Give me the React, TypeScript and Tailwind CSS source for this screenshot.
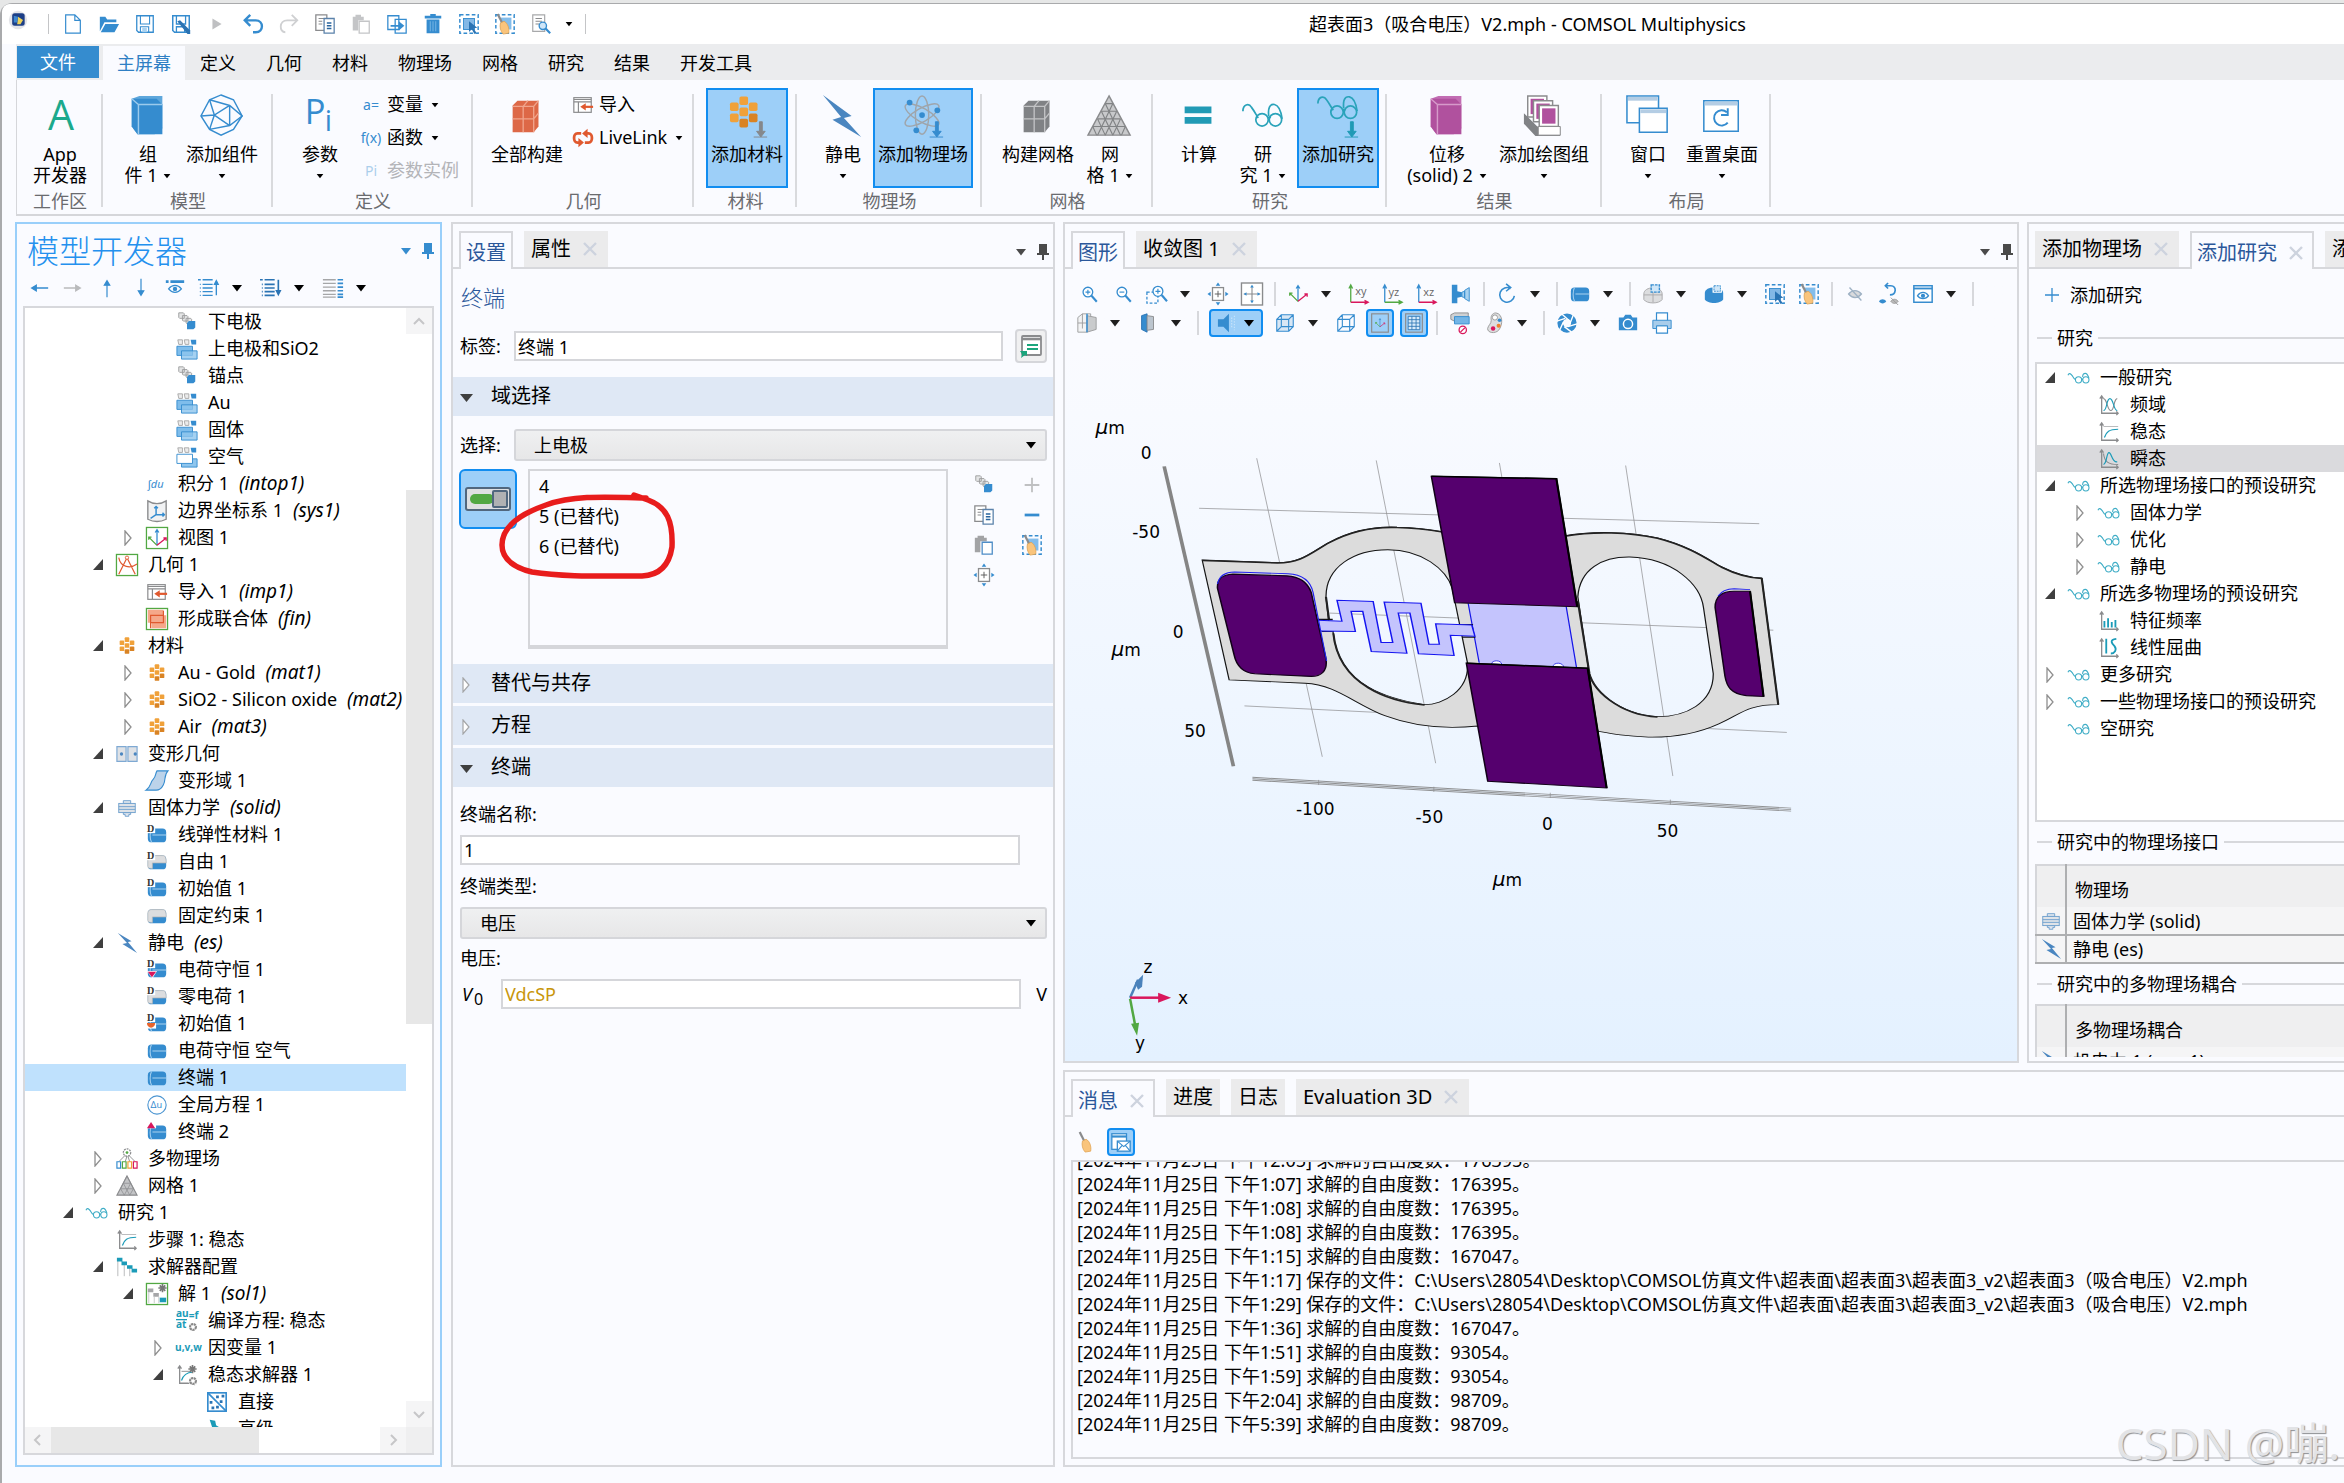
import React from 'react'

const BLUE = '#358ccf'
const GRAY = '#8a8b8d'
const TEAL = '#1b9bb8'
const RED = '#e0592f'
const PINK = '#d9175c'

const cursor = <path d="M12 9l9 7-4 .6 3 5-2 1.2-3-5-3 3z" fill="#2a73b3" />
const broom = (
  <>
    <path d="M4 1l5 10" stroke={GRAY} strokeWidth="2.4" />
    <path d="M7 11l4-2c4 2 6 8 5 13l-6 1c-3-3-4-8-3-12z" fill="#f9c47c" stroke="#e0a04e" strokeWidth="0.8" />
  </>
)
const dashedBox = <rect x="2" y="2" width="20" height="20" fill="none" stroke={BLUE} strokeWidth="1.6" strokeDasharray="4 2.5" />
const axesPair = <path d="M4 3v18h18M2 5l2-3 2 3M20 19l2 2-2 2" fill="none" stroke={GRAY} strokeWidth="1.4" />
const glasses = (
  <g fill="none" stroke="#3fadc6" strokeWidth="1.2">
    <path d="M0 9c1-3 3-2 5 1 1 2 2 3 3.500 4" />
    <circle cx="11.5" cy="14" r="3.4" />
    <circle cx="19.5" cy="14" r="3.4" />
    <path d="M14.800 13.500h1.500M16 11c0-3 1-4 3-4s3 3 3.800 5" />
  </g>
)
const cylinder = (
  <>
    <rect x="2" y="5" width="20" height="15" rx="4" fill={BLUE} />
    <path d="M6 5c-2 4-2 11 0 15M7 12h15" stroke="#a9d2f0" strokeWidth="1.1" fill="none" />
  </>
)
const halfCylinder = (
  <>
    <rect x="2" y="5" width="20" height="15" rx="4" fill={BLUE} />
    <path d="M2 17V9c0-3 2-4 4-4h12c3 0 4 2 4 8H7v6c-3 0-5 0-5-2z" fill="#dcdddf" stroke="#b5b6b8" strokeWidth="0.8" />
  </>
)
const badgeD = (
  <>
    <rect x="0" y="0" width="10" height="10" fill="#fff" />
    <text x="1" y="9" fontSize="11" fontWeight="700" fontFamily="Liberation Serif, serif" fill="#333">D</text>
  </>
)
const miniBoxes = (
  <>
    <path d="M2 2h5v5H3zM9 2h5v5h-4z" fill="#ececec" stroke="#a6a6a6" />
    <path d="M16 2h6v5h-5z" fill={BLUE} />
  </>
)
const bolt = <path d="M2 1l15 9-4 1 10 12L7 13l5-1z" fill="#4a86c0" />
const meshTri = (
  <>
    <path d="M12 1L23 22H1z" fill="#c3c4c6" stroke={GRAY} strokeWidth="1.2" />
    <path d="M8 9h8M5 15h14M8 9l7 13M5 15l4 7M16 9L9 22M19 15l-4 7M12 1l7 14M12 1L5 15" stroke="#8b8c8e" strokeWidth="0.8" fill="none" />
  </>
)
const material = (
  <>
    <g fill="#f0a13a">
      <rect x="9.5" y="2.5" width="5" height="5" rx="1" />
      <rect x="4" y="6" width="5" height="5" rx="1" />
      <rect x="15" y="6" width="5" height="5" rx="1" />
      <rect x="9.5" y="9" width="5" height="5" rx="1" />
      <rect x="4" y="12.5" width="5" height="5" rx="1" />
    </g>
    <rect x="15" y="12.5" width="5" height="5" rx="1" fill="#d98324" />
    <rect x="9.5" y="15.5" width="5" height="5" rx="1" fill="#d98324" />
  </>
)
const solidPart = (
  <>
    <path d="M8 4h8v3H8zM8 17h8v2h-2v2h-4v-2H8z" fill="#dfe6ee" stroke="#6d9fcd" />
    <rect x="3" y="7" width="18" height="10" fill="#dfe3e8" stroke="#6d9fcd" />
    <path d="M3 10.500h18M3 13.500h18" stroke="#6d9fcd" />
  </>
)
const magnifier = (
  <>
    <circle cx="10" cy="9" r="6" fill="#fff" stroke={BLUE} strokeWidth="1.6" />
    <path d="M14.500 13.500L21 21" stroke={BLUE} strokeWidth="2.6" />
  </>
)
const triad = (
  <g fill="none" strokeWidth="1.4">
    <path d="M12 20V3M10 6l2-3 2 3" stroke={BLUE} />
    <path d="M12 20L3 11M3 14v-3h3" stroke="#4fa83d" />
    <path d="M12 20l10-8M22 15v-3h-3" stroke={PINK} />
  </g>
)
const importIcon = (
  <>
    <rect x="2" y="4" width="19" height="16" fill="#fff" stroke={GRAY} strokeWidth="1.3" />
    <path d="M2 6h19M2 8.500h19M7 8v12" stroke={GRAY} strokeWidth="1.3" />
    <path d="M23 14H13" stroke={RED} strokeWidth="2.4" />
    <path d="M15 10v8l-6-4z" fill={RED} />
  </>
)
const star = <path d="M18 1v9M13.500 5.500h9M15 2.500l6 6M21 2.500l-6 6" stroke="#777" strokeWidth="1.8" />
const gear = <circle cx="18.500" cy="18.500" r="3.200" fill="none" stroke="#888" strokeWidth="2.4" strokeDasharray="2.5 0.6" />
const wireCube = <path d="M3 8h13v13H3zM8 3h13v13H8zM3 8l5-5M16 8l5-5M16 21l5-5M3 21l5-5" fill="none" stroke={BLUE} strokeWidth="1.2" />
const diagCubes = (
  <>
    <path d="M3 2h5l1 1v5H4L3 7zM7 5h5l1 1v5H8L7 10zM11 8h5l1 1v5h-5l-1-1z" fill="#e4e5e6" stroke="#9b9c9e" />
    <path d="M12 13l2-2h7v7l-2 2h-7z" fill={BLUE} />
  </>
)
const copyIcon = (
  <>
    <path d="M2 2h12v17H2z" fill="#fff" stroke={GRAY} strokeWidth="1.4" />
    <path d="M5 6h6M5 9h4M5 12h4" stroke={GRAY} strokeWidth="1.3" />
    <path d="M11 6h11v16H11z" fill="#fff" stroke="#5b82ab" strokeWidth="1.4" />
    <path d="M14 11h5M14 14h5M14 17h5" stroke="#27649e" strokeWidth="1.6" />
  </>
)

const icons: Record<string, React.ReactNode> = {
  logo: (
    <>
      <circle cx="12" cy="12" r="11" fill="#e3e4e8" />
      <rect x="5" y="4" width="15" height="15" rx="3" fill="#1d3f87" />
      <path d="M12 8l6 4-3 5h-4z" fill="#ecd25a" />
      <path d="M7 7l5 1-1 7H7z" fill="#3d87cf" />
    </>
  ),
  newFile: <path d="M4 2h10l6 6v14H4zM14 2v6h6" fill="#fff" stroke={BLUE} strokeWidth="1.3" />,
  open: <path d="M2 20V4h6l2 3h10v3H7zM3 21l5-9h15l-5 9z" fill={BLUE} />,
  save: (
    <>
      <path d="M3 3h18v18H5l-2-2z" fill="#fff" stroke={BLUE} strokeWidth="1.4" />
      <path d="M7 3v9h10V3M7 21v-6h9v6" fill="none" stroke={BLUE} strokeWidth="1.2" />
      <path d="M9 16h5v5H9z" fill="#a9d2f0" />
    </>
  ),
  saveAs: (
    <>
      <path d="M3 3h18v18H5l-2-2z" fill="#fff" stroke={BLUE} strokeWidth="1.6" />
      <path d="M7 3v9h10V3M7 21v-6h9v6" fill="none" stroke={BLUE} strokeWidth="1.4" />
      <path d="M8 9l3-1 11 11v4h-3z" fill="#2a73b3" />
    </>
  ),
  play: <path d="M7 6l10 6-10 6z" fill="#bfc0c2" />,
  undo: <path d="M9 2L3 8l6 6M3 8h12c9 0 9 13 0 13h-3" fill="none" stroke={BLUE} strokeWidth="2.600" />,
  redo: <path d="M15 2l6 6-6 6M21 8H10c-9 0-9 13-2 13" fill="none" stroke="#cfd0d2" strokeWidth="2" />,
  copy: copyIcon,
  pasteOff: (
    <>
      <path d="M3 4h12v4H9v11H3zM6 2h6v3H6z" fill="#c4c5c7" />
      <path d="M10 9h11v13H10z" fill="#fff" stroke="#c4c5c7" strokeWidth="1.4" />
    </>
  ),
  paste: (
    <>
      <path d="M2 4h13v4H8v12H2zM5 2h7v3H5z" fill="#a2a3a5" />
      <path d="M10 9h11v13H10z" fill="#fff" stroke="#4d8cc6" strokeWidth="1.4" />
    </>
  ),
  duplicate: (
    <>
      <path d="M2 3h12v15H2zM10 7h12v15H10z" fill="#fff" stroke={BLUE} strokeWidth="1.4" />
      <path d="M5 13h9v-4l6 5-6 5v-4H5z" fill={BLUE} />
    </>
  ),
  trash: (
    <>
      <path d="M5 7h14v15H5zM3 3h18v3H3zM9 1h6v3H9z" fill={BLUE} />
      <path d="M9 9v11M12 9v11M15 9v11" stroke="#7db9e6" />
    </>
  ),
  select: <>{dashedBox}<rect x="6" y="6" width="12" height="12" fill="#83b8e6" stroke={BLUE} />{cursor}</>,
  clearSelect: <>{dashedBox}<rect x="7" y="5" width="12" height="13" fill="#83bdeb" />{broom}</>,
  find: (
    <>
      <path d="M3 2h13v18H3z" fill="#fff" stroke="#a8a9ab" strokeWidth="1.3" />
      <path d="M6 6h7M6 9h7M6 12h4" stroke={GRAY} strokeWidth="1.200" />
      <circle cx="14" cy="14" r="4" fill="#cfe6f8" stroke={BLUE} strokeWidth="1.5" />
      <path d="M17 17l5 5" stroke={BLUE} strokeWidth="2.4" />
    </>
  ),
  broom,
  diagCubes,
  union: <>{miniBoxes}<path d="M1 9h17v10H1z" fill="#7fbdeb" stroke={BLUE} /><path d="M6 14h17v9H6z" fill="#8fc6ee" fillOpacity=".8" stroke={BLUE} /></>,
  difference: <>{miniBoxes}<path d="M6 14h17v9H6z" fill="#8fc6ee" stroke={BLUE} /><path d="M1 9h17v10H1z" fill="#fff" stroke={BLUE} /></>,
  integral: <text x="2" y="16" fontSize="12" fontStyle="italic" fontFamily="Noto Sans, sans-serif" fill={BLUE}>∫du</text>,
  boundarySystem: (
    <>
      <path d="M2 1v20c6 3 14 3 20 0V1c-6 4-14 4-20 0z" fill="#f1f2f3" stroke={GRAY} strokeWidth="1.5" />
      <path d="M11 7v9h9M11 16l-6 4M9 9l2-2 2 2M18 14l2 2-2 2" fill="none" stroke={BLUE} strokeWidth="1.6" />
    </>
  ),
  view: <><rect x="0.500" y="0.500" width="23" height="23" fill="#fff" stroke="#52a843" strokeWidth="1.4" />{triad}</>,
  geometry: (
    <>
      <rect x="0.500" y="0.500" width="23" height="23" fill="#fff" stroke="#52a843" strokeWidth="1.4" />
      <path d="M12 4L3 22M12 4l9 18M3 4c2 11 13 12 20 7" fill="none" stroke={RED} strokeWidth="1.3" />
      <circle cx="12" cy="4" r="1.800" fill="#fff" stroke={RED} />
    </>
  ),
  importIcon,
  formUnion: (
    <>
      <rect x="0.500" y="0.500" width="23" height="23" fill="#fff" stroke="#52a843" strokeWidth="1.4" />
      <path d="M2 2h17v14H2zM6 8h16v14H6z" fill="#f5a88a" />
      <path d="M19 3v13H5M5 22V8h14" fill="none" stroke={RED} strokeWidth="1.3" />
    </>
  ),
  material,
  deformed: (
    <>
      <path d="M1 4h10v16H1zM13 4h10v16H13z" fill="#dfe2e6" stroke="#7ea9d3" strokeWidth="1.300" />
      <circle cx="6" cy="12" r="1.800" fill="#4a86c0" />
      <circle cx="21" cy="12" r="1.800" fill="#4a86c0" />
    </>
  ),
  deformDomain: <path d="M12 1h12c-5 5-2 10-5 15-2 4-4 6-8 6H0c6-4 4-8 8-12 3-3 2-6 4-9z" fill="#bcd3ea" stroke={BLUE} strokeWidth="1.2" />,
  solidPart,
  cylinder,
  halfCylinder,
  cylinderD: <>{cylinder}{badgeD}</>,
  halfCylinderD: <>{halfCylinder}{badgeD}</>,
  cylinderDRed: <>{cylinder}{badgeD}<path d="M1 13h11l-5 8z" fill="#fff" /><path d="M2 14h9l-4.500 6z" fill={PINK} /></>,
  cylinderDOrange: <>{cylinder}{badgeD}<path d="M1 11h10v6H1z" fill="#fff" /><path d="M1 11h9c0 3-2 5-4.500 5S1 14 1 11z" fill="#e8642c" /></>,
  cylinderRed: <>{cylinder}<path d="M0 8h11V0H0z" fill="#fff" /><path d="M1 8h9L5.500 1z" fill={PINK} /></>,
  globalEq: (
    <>
      <circle cx="12" cy="12" r="10" fill="#fff" stroke="#4d96d2" strokeWidth="1.200" />
      <text x="5" y="15.500" fontSize="10" fontFamily="Noto Sans, sans-serif" fill={BLUE}>Δu</text>
    </>
  ),
  bolt,
  multiphysics: (
    <>
      <circle cx="12" cy="5" r="4" fill="none" stroke={GRAY} strokeWidth="1.4" strokeDasharray="2 1" />
      <circle cx="12" cy="5" r="1.5" fill="#52a843" />
      <path d="M10 8L3 15M12 9l-2 6M13 9l2 6M14 8l7 7" stroke={GRAY} />
      <g fill="#fff" strokeWidth="1.300">
        <path d="M1 15h4v7H1z" stroke={BLUE} />
        <path d="M7 15h4v7H7z" stroke="#52a843" />
        <path d="M13 15h4v7h-4z" stroke="#f0a13a" />
        <path d="M19 15h4v7h-4z" stroke={PINK} />
      </g>
    </>
  ),
  meshTri,
  glasses,
  stationary: <>{axesPair}<path d="M6 6h16" stroke="#b5b6b8" /><path d="M7 18c2-6 5-9 15-9" fill="none" stroke={TEAL} strokeWidth="1.3" /></>,
  frequency: <>{axesPair}<path d="M6 5c4 0 4 13 8 13s3-13 7-13" fill="none" stroke={GRAY} strokeWidth="1.200" /><path d="M6 18c4 0 3-13 7-13s4 13 8 13" fill="none" stroke={TEAL} strokeWidth="1.200" /></>,
  transient: <>{axesPair}<path d="M6 6c1 9 5 12 16 12" fill="none" stroke={GRAY} strokeWidth="1.200" /><path d="M6 18c4-1 3-13 6-13s3 11 9 10" fill="none" stroke={TEAL} strokeWidth="1.3" /></>,
  eigen: <>{axesPair}<path d="M7 19v-7M11 19V9M15 19v-6M19 19v-8" stroke={TEAL} strokeWidth="2" /></>,
  buckling: <>{axesPair}<path d="M9 2v16M20 2c-8 1-5 5-2 8 3 4 0 8-4 8" fill="none" stroke={TEAL} strokeWidth="2" /></>,
  solverConfig: (
    <>
      <path d="M2 4v18M9 8v14M15 12v10" stroke="#b5b6b8" />
      <path d="M1 2h6v4H1zM6 6h6v4H6zM12 10h6v4h-6zM17 14h6v4h-6z" fill={TEAL} />
    </>
  ),
  solution: (
    <>
      <rect x="0.500" y="0.500" width="23" height="23" fill="#fff" stroke="#52a843" strokeWidth="1.4" />
      <path d="M2 6h6v4H2zM8 11h6v4H8z" fill="#a5a6a8" />
      <path d="M3 10v12M9 15v7M14 15v7" stroke="#c5c6c8" />
      <rect x="15" y="16" width="7" height="5" fill={TEAL} />
      {star}
    </>
  ),
  compile: (
    <>
      <g fontSize="11" fontWeight="700" fontFamily="Noto Sans, sans-serif" fill={TEAL}>
        <text x="0" y="8">au</text>
        <text x="0" y="20">at</text>
        <text x="14" y="10">=f</text>
      </g>
      <path d="M0 10.500h12" stroke={TEAL} strokeWidth="1.4" />
      {gear}
    </>
  ),
  dependent: <text x="-1" y="15" fontSize="11" fontWeight="700" fontFamily="Open Sans, sans-serif" fill={TEAL}>u,v,w</text>,
  stationarySolver: <>{axesPair}<path d="M6 8h9" stroke={GRAY} /><path d="M6 18c2-6 6-9 12-9" fill="none" stroke={TEAL} strokeWidth="1.3" />{star}<circle cx="18.500" cy="18.500" r="5" fill="#fff" />{gear}</>,
  direct: (
    <>
      <rect x="2" y="2" width="20" height="20" fill="#fff" stroke={BLUE} strokeWidth="1.8" />
      <path d="M2 2l20 20" stroke={BLUE} strokeWidth="1.800" />
      <path d="M11 5h3v3h-3zM17 4h3v3h-3zM15 10h3v3h-3zM4 11h3v3H4zM6 17h3v3H6zM11 16h3v3h-3z" fill="#2a73b3" />
    </>
  ),
  wrench: <path d="M4 2l6 1 1 5 10 6v8l-3 1-4-9-7-3z" fill={TEAL} />,
  back: <path d="M22 12H4M9 9l-5 3 5 3z" stroke={BLUE} strokeWidth="1.4" fill={BLUE} />,
  forward: <path d="M2 12h18M15 9l5 3-5 3z" stroke="#b9babc" strokeWidth="1.4" fill="#b9babc" />,
  up: <path d="M12 22V4M9 9l3-5 3 5z" stroke={BLUE} strokeWidth="1.3" fill={BLUE} />,
  down: <path d="M12 2v18M9 15l3 5 3-5z" stroke={BLUE} strokeWidth="1.3" fill={BLUE} />,
  showEye: (
    <>
      <path d="M2 5h3M7 5h15" stroke={BLUE} strokeWidth="3" />
      <path d="M5 13c4-5 10-5 14 0-4 5-10 5-14 0z" fill="none" stroke={BLUE} strokeWidth="1.4" />
      <circle cx="12" cy="13" r="2.400" fill={BLUE} />
    </>
  ),
  collapse: <path d="M0 3h3M5 3h11M2 8h1M5 8h11M2 12h1M5 12h11M2 16h1M5 16h11M2 20h1M5 20h11M20 20V4M18 8l2-4 2 4z" stroke={BLUE} strokeWidth="1.5" fill={BLUE} />,
  expand: <path d="M0 3h3M5 3h11M2 8h1M5 8h11M2 12h1M5 12h11M2 16h1M5 16h11M2 20h1M5 20h11M20 3v16M18 15l2 4 2-4z" stroke="#2a73b3" strokeWidth="1.8" fill={BLUE} />,
  columns: (
    <>
      <path d="M1 3h14M1 7h14M1 11h14M1 15h14M1 19h14M1 22h14" stroke="#a5a6a8" strokeWidth="1.5" />
      <path d="M17 3h6M17 7h6M17 11h6M17 15h6M17 19h6M17 22h6" stroke={BLUE} strokeWidth="1.8" />
    </>
  ),
  plusOff: <path d="M12 4v16M4 12h16" stroke="#bfc0c2" strokeWidth="2" />,
  plus: <path d="M12 5v14M5 12h14" stroke={BLUE} strokeWidth="1.300" />,
  minus: <path d="M4 12h16" stroke={BLUE} strokeWidth="3" />,
  extents: (
    <>
      <rect x="6" y="5" width="12" height="14" fill="#fff" stroke={GRAY} strokeWidth="1.4" />
      <path d="M12 8.500v7M8.500 12h7" stroke="#555" />
      <path d="M9.500 3L12 -.5 14.500 3zM9.500 21l2.500 3.500 2.500-3.500zM4 9.500L.5 12 4 14.500zM20 9.500l3.500 2.500-3.500 2.500z" fill={BLUE} />
    </>
  ),
  fitWindow: (
    <>
      <rect x="0.500" y="0" width="23" height="24" fill="#fff" stroke={GRAY} strokeWidth="1.500" />
      <path d="M12 3v18M3 12h18" stroke={GRAY} strokeWidth="1.200" />
      <path d="M10 5l2-3 2 3zM10 19l2 3 2-3zM6 10l-3 2 3 2zM18 10l3 2-3 2z" fill={BLUE} />
    </>
  ),
  zoomIn: <g transform="translate(2 2) scale(.88)">{magnifier}<path d="M10 6v6M7 9h6" stroke={BLUE} strokeWidth="1.4" /></g>,
  zoomOut: <g transform="translate(2 2) scale(.88)">{magnifier}<path d="M7 9h6" stroke={BLUE} strokeWidth="1.4" /></g>,
  zoomBox: <><path d="M1 10h12v12H1z" fill="none" stroke={BLUE} strokeWidth="1.4" strokeDasharray="3 2" /><g transform="translate(4 1) scale(.9)">{magnifier}<path d="M10 6v6M7 9h6" stroke={BLUE} strokeWidth="1.4" /></g></>,
  triad,
  planeXY: <><path d="M3 21V3M1 6l2-4 2 4" fill="none" stroke="#52a843" strokeWidth="1.4" /><path d="M3 21h18M18 19l4 2-4 2" fill="none" stroke={PINK} strokeWidth="1.4" /><text x="8" y="13" fontSize="12" fontFamily="Open Sans, sans-serif" fill="#666">xy</text></>,
  planeYZ: <><path d="M3 21V3M1 6l2-4 2 4" fill="none" stroke={BLUE} strokeWidth="1.4" /><path d="M3 21h18M18 19l4 2-4 2" fill="none" stroke="#52a843" strokeWidth="1.4" /><text x="7" y="14" fontSize="12" fontFamily="Open Sans, sans-serif" fill="#666">yz</text></>,
  planeXZ: <><path d="M3 21V3M1 6l2-4 2 4" fill="none" stroke={BLUE} strokeWidth="1.4" /><path d="M3 21h18M18 19l4 2-4 2" fill="none" stroke={PINK} strokeWidth="1.4" /><text x="8" y="14" fontSize="12" fontFamily="Open Sans, sans-serif" fill="#666">xz</text></>,
  camView: <><path d="M2 2h6v20H2zM8 9l5 1v5l-5 1z" fill={BLUE} /><path d="M13 10l3-1v7l-3-1zM16 8l5-3v15l-5-3z" fill="#a9d2f0" stroke={BLUE} /></>,
  rotate: <path d="M16 6a8 8 0 1 0 4 8M11 1l5 4-5 4" fill="none" stroke={BLUE} strokeWidth="1.700" />,
  grayLens: <><path d="M2 12c0-9 20-9 20 0v6c-3 5-17 5-20 0z" fill="#dcdddf" stroke="#a8a9ab" /><path d="M2 13h20M12 6v15" stroke="#a8a9ab" /><rect x="10" y="2" width="9" height="8" fill="#cfe6f8" stroke={BLUE} strokeWidth="1.5" strokeDasharray="3 1" /></>,
  blueLens: <><path d="M2 11c0-8 20-8 20 0v7c-3 5-17 5-20 0z" fill={BLUE} /><rect x="11" y="2" width="9" height="8" fill="#cfe6f8" stroke="#fff" strokeWidth="1.2" /><rect x="12" y="3" width="7" height="6" fill="none" stroke={BLUE} strokeDasharray="2 1" /></>,
  eyeOff: <path d="M5 12c4-5 10-5 14 0-4 5-10 5-14 0zM6 5l13 14" fill="#d9dadc" stroke="#9fb2c4" strokeWidth="1.5" />,
  resetHide: <><path d="M8 3h6c7 0 6 10-1 10M11 0L8 3l3 3" fill="none" stroke={BLUE} strokeWidth="1.800" /><path d="M1 20c2-3 6-3 8 0-2 3-6 3-8 0z" fill={BLUE} /><path d="M14 20c2-3 6-3 8 0-2 3-6 3-8 0zM14 16l8 8" fill="#bbb" stroke="#999" /></>,
  showWindow: <><rect x="2" y="3" width="20" height="18" fill="#fff" stroke={BLUE} strokeWidth="1.6" /><path d="M2 6h20" stroke={BLUE} strokeWidth="2" /><path d="M6 14c3-5 9-5 12 0-3 4-9 4-12 0z" fill="none" stroke={BLUE} strokeWidth="1.4" /><circle cx="12" cy="14" r="2.300" fill={BLUE} /></>,
  clipBox: <><path d="M2 6l5-4h9v16l-4 4H2z" fill="#f2f3f4" stroke="#9b9c9e" /><path d="M12 4l10 2v13l-10 3z" fill="#c9cbcd" stroke="#9b9c9e" /><path d="M2 12h10M7 2v16" stroke="#9b9c9e" /><path d="M12 2v20" stroke={BLUE} strokeWidth="1.6" /></>,
  clipPlane: <><path d="M5 4l6-2v20l-6-3z" fill={BLUE} stroke="#2a73b3" /><path d="M11 4l7 1v14l-7 1z" fill="#bcc5ce" stroke={GRAY} /></>,
  light: <><path d="M1 8h6v8H1zM7 8l6-6v20l-6-6z" fill={BLUE} /><path d="M16 6v12M19 4v16" stroke="#c5e2f9" strokeWidth="1.300" strokeDasharray="1.5 1.5" /></>,
  transparent: <><path d="M3 8h13v13H3zM8 3h13v13H8z" fill="#c9def1" opacity=".7" />{wireCube}</>,
  wireCube,
  axesBox: <><rect x="2" y="1" width="20" height="22" fill="none" stroke={GRAY} strokeWidth="1.4" /><g transform="translate(5 5) scale(.58)">{triad}</g></>,
  grid: <><rect x="2" y="1" width="20" height="22" fill="none" stroke={GRAY} strokeWidth="1.4" /><path d="M5 4h14v16H5z" fill="#d6eafa" stroke="#2a73b3" /><path d="M9.500 4v16M14.500 4v16M5 8h14M5 12h14M5 16h14" stroke="#2a73b3" /></>,
  hideBox: <><path d="M2 3l4-2h15v9H6L2 8z" fill="#cfd1d3" stroke={GRAY} /><path d="M6 5h16v8H6z" fill="#73b5e6" stroke={BLUE} /><circle cx="15" cy="19.500" r="4" fill="#fff" stroke={PINK} strokeWidth="1.4" /><path d="M12.500 22l5-5" stroke={PINK} strokeWidth="1.4" /></>,
  palette: <><path d="M14 1c8 1 8 13 3 19-4 4-12 3-12-2 1-4 4-5 4-9-1-4 1-8 5-8z" fill="#dddedf" stroke="#999" /><circle cx="13" cy="6" r="2.800" fill="#fff" stroke="#999" /><circle cx="18" cy="9" r="2" fill={BLUE} /><circle cx="17" cy="15" r="2.200" fill="#f0812c" /><circle cx="11" cy="18" r="2.400" fill={PINK} /></>,
  aperture: <><circle cx="12" cy="12" r="7.500" fill="none" stroke={BLUE} strokeWidth="6" /><path d="M6 2l8 7M19 3l-4 10M23 13l-10 3M17 22l-8-6M4 20l4-9M1 10l9-3" stroke="#fff" strokeWidth="1.500" /></>,
  camera: <><path d="M2 6h5l2-3h6l2 3h5v14H2z" fill={BLUE} /><circle cx="12" cy="13" r="5" fill={BLUE} stroke="#fff" strokeWidth="1.600" /></>,
  printer: <><path d="M6 1h12v9H6zM6 15h12v8H6z" fill="#fff" stroke={BLUE} strokeWidth="1.3" /><path d="M2 9h20v9h-4v-3H6v3H2z" fill="#a9cdea" stroke={BLUE} /></>,
  mail: <><rect x="2" y="3" width="16" height="17" fill="#fff" stroke={BLUE} strokeWidth="1.4" /><path d="M2 6h16" stroke={BLUE} strokeWidth="2.400" /><rect x="8" y="11" width="14" height="11" fill="#fff" stroke={BLUE} strokeWidth="1.4" /><path d="M8 11l7 6 7-6M8 22l5-6M22 22l-5-6" fill="none" stroke={BLUE} strokeWidth="1.200" /></>,
  goTo: <><rect x="3" y="2" width="19" height="19" rx="1" fill="#fff" stroke={GRAY} strokeWidth="1.800" /><path d="M3 5h19" stroke={GRAY} strokeWidth="2.600" /><path d="M8 11h11M8 15h11" stroke="#1ba57c" strokeWidth="2" /><path d="M1 17h7v5l-2-1-4 3 1-4z" fill="#1ba57c" /></>,
  livelink: (
    <>
      <path d="M10 7H6c-5 0-5 10 0 10h2M14 17h4c5 0 5-10 0-10h-2" fill="none" stroke={RED} strokeWidth="3" />
      <path d="M7 12l6 5-6 5zM17 2v10l-6-5z" fill={RED} />
    </>
  ),
}

const cubeFaces = (a: string, b: string, line: string) => (
  <>
    <path d="M6 5l8-3h24v34l-8 6H12l-6-8z" fill={b} />
    <path d="M6 5h26l6 6v31H12L6 34z" fill={a} />
    <path d="M6 5l7 6h25M13 11v31" fill="none" stroke={line} strokeWidth="1.500" />
  </>
)
const glassesBig = (color: string) => (
  <g fill="none" stroke={color} strokeWidth="1.800">
    <path d="M2 18c0-7 6-9 9-4 3 4 5 8 7 11" />
    <circle cx="22" cy="27" r="6.500" />
    <circle cx="36" cy="27" r="6.500" />
    <path d="M28 25c1-1 2-1 3 0M29 23c-1-8 1-13 6-12 5 1 7 8 8 15" />
  </g>
)
const gridCube = (color: string, line: string) => (
  <>
    <path d="M8 12l5-5h22v27l-5 6H8z" fill={color} />
    <path d="M8 13h22l5-6M30 13v27M19 13v27M8 26h22l5-6M19 13l5-6" fill="none" stroke={line} strokeWidth="1.400" />
  </>
)
const downArrow = (color: string) => <path d="M36 29v10h-3l4.500 6 4.500-6h-3V29zM30 45h14" fill={color} stroke={color} strokeWidth="1" />

const bigIcons: Record<string, React.ReactNode> = {
  app: <text x="24" y="38" textAnchor="middle" fontSize="43" fontFamily="Open Sans, sans-serif" fill="#1ba98c">A</text>,
  component: cubeFaces(BLUE, '#5ea7dc', '#9bcaec'),
  addComponent: (
    <g fill="none" stroke={BLUE} strokeWidth="1.500">
      <path d="M22 1l13 5 9 17-9 14-13 6-12-6-9-14 9-17z" />
      <path d="M10 6l21 6 13 11-13 10-21 4M31 12v21M10 6l5 16-5 15M1 23l14-1 16-10M15 22l16 11" />
    </g>
  ),
  params: (
    <g fontFamily="Open Sans, sans-serif" fill={BLUE}>
      <text x="7" y="31" fontSize="36">P</text>
      <text x="28" y="39" fontSize="30">i</text>
    </g>
  ),
  buildAll: gridCube('#dd6847', '#f0a48c'),
  addMaterial: <><g transform="translate(-2 -2) scale(1.8)">{material}</g>{downArrow('#85888c')}</>,
  electro: <path d="M2 1l30 22-8 2 18 20L12 27l9-3z" fill="#4a86c0" />,
  addPhysics: (
    <>
      <g fill="none" stroke="#9fa5ab" strokeWidth="1.500">
        <ellipse cx="22" cy="22" rx="7" ry="20" />
        <ellipse cx="22" cy="22" rx="7" ry="20" transform="rotate(60 22 22)" />
        <ellipse cx="22" cy="22" rx="7" ry="20" transform="rotate(-60 22 22)" />
      </g>
      <g fill={BLUE}><circle cx="22" cy="22" r="3" /><circle cx="9" cy="9" r="3" /><circle cx="38" cy="17" r="3" /><circle cx="16" cy="38" r="3" /></g>
      {downArrow(BLUE)}
    </>
  ),
  buildMesh: gridCube('#808285', '#c2c3c5'),
  mesh: (
    <>
      <path d="M22 2L44 43H0z" fill="#c8c9cb" stroke={GRAY} strokeWidth="1.500" />
      <path d="M18 10h8M14 18h16M10 26h24M5 34h34M18 10l16 33M14 18l12 25M10 26l8 17M5 34l4 9M26 10L10 43M30 18L18 43M34 26l-8 17M39 34l-4 9" stroke="#818385" strokeWidth="1.200" fill="none" />
    </>
  ),
  compute: <path d="M8 13h28v7H8zM8 24h28v7H8z" fill="#219ab5" />,
  study: glassesBig('#2aa3ba'),
  addStudy: <><g transform="translate(0 -8)">{glassesBig('#2aa3ba')}</g>{downArrow('#219ab5')}</>,
  plotGroup: cubeFaces('#b0519e', '#c26db3', '#d69aca'),
  addPlot: (
    <>
      <path d="M6 2h20v22H6z" fill="#fff" stroke={GRAY} strokeWidth="1.500" />
      <path d="M9 5h14v16H9z" fill="#b0519e" />
      <path d="M12 7h20v22H12z" fill="#fff" stroke={GRAY} strokeWidth="1.500" />
      <path d="M15 10h14v16H15z" fill="#b0519e" />
      <path d="M18 12h20v22H18z" fill="#fff" stroke={GRAY} strokeWidth="1.500" />
      <path d="M21 15h14v16H21z" fill="#b0519e" />
      <path d="M2 20l14 14h24v10H14L2 31z" fill="#808285" />
      <path d="M17 34h23v9H17z" fill="#fff" stroke={GRAY} />
    </>
  ),
  windows: (
    <>
      <path d="M1 2h33v28H1z" fill="#fff" stroke={BLUE} strokeWidth="1.600" />
      <path d="M2 3h31v4H2z" fill="#b4cde4" />
      <path d="M14 15h29v25H14z" fill="#fff" stroke={BLUE} strokeWidth="1.600" />
      <path d="M15 16h27v4H15z" fill="#b4cde4" />
    </>
  ),
  reset: (
    <>
      <path d="M4 7h36v32H4z" fill="#fff" stroke={BLUE} strokeWidth="1.600" />
      <path d="M5 8h34v4H5z" fill="#b4cde4" />
      <path d="M29 30a8 8 0 1 1-1-11M29 15v7h-7" fill="none" stroke={BLUE} strokeWidth="2" />
    </>
  ),
}

const Icon = ({ name, className = 'w-[22px] h-[22px]' }: { name: string; className?: string }) => (
  <svg viewBox="0 0 24 24" className={`shrink-0 overflow-visible ${className}`} fill="none" aria-hidden="true">{icons[name]}</svg>
)

const Caret = ({ className = 'w-3 text-[#1e1e1e]' }: { className?: string }) => (
  <svg viewBox="0 0 12 8" className={`h-2 shrink-0 ${className}`} aria-hidden="true"><path d="M1 1h10L6 7.500z" fill="currentColor" /></svg>
)

const Pin = () => (
  <svg viewBox="0 0 12 18" className="h-[18px] w-3" aria-hidden="true">
    <path d="M2 1h8v9h2v2H0v-2h2zM5 12h2v5H5z" fill="currentColor" />
  </svg>
)

const IconButton = ({ name, label }: { name: string; label: string }) => (
  <button aria-label={label} className="w-6 h-6 flex items-center justify-center shrink-0">
    <Icon name={name} />
  </button>
)

/* ---------- title bar and ribbon ---------- */

const QUICK = ['newFile', 'open', 'save', 'saveAs', 'play', 'undo', 'redo', 'copy', 'pasteOff', 'duplicate', 'trash', 'select', 'clearSelect', 'find']
const MENUS = ['定义', '几何', '材料', '物理场', '网格', '研究', '结果', '开发工具']

const TitleBar = () => (
  <div className="h-10 flex items-center bg-white rounded-tl-lg shrink-0">
    <Icon name="logo" className="w-5 h-5 ml-1.5 mb-2" />
    <div className="w-px h-5 bg-[#c4c5c7] ml-5 mr-3" />
    <div className="flex items-center gap-3">
      {QUICK.map((q) => <IconButton key={q} name={q} label={q} />)}
      <button aria-label="more"><Caret className="w-2 text-black" /></button>
      <div className="w-px h-5 bg-[#c4c5c7]" />
    </div>
    <h1 className="ml-[723px] text-[18px] whitespace-nowrap">超表面3（吸合电压）V2.mph - COMSOL Multiphysics</h1>
  </div>
)

interface BigButtonProps {
  icon: string
  line1: string
  line2?: string
  caret?: boolean
  active?: boolean
  className?: string
}

const BigButton = ({ icon, line1, line2, caret, active, className = '' }: BigButtonProps) => (
  <button className={`h-[100px] shrink-0 flex flex-col items-center pt-1 border-2 leading-[21px] whitespace-nowrap ${active ? 'bg-[#9dcff8] border-[#118df0]' : 'border-transparent'} ${className}`}>
    <svg viewBox="0 0 46 46" className="w-11 h-11 overflow-visible" aria-hidden="true">{bigIcons[icon]}</svg>
    <span className="mt-1.5">{line1}</span>
    <span className="flex items-center gap-1.5 h-[21px]">
      {line2}
      {caret && <Caret className="w-2 text-black" />}
    </span>
  </button>
)

const SmallButton = ({ icon, text, caret, disabled }: { icon: React.ReactNode; text: string; caret?: boolean; disabled?: boolean }) => (
  <button className={`h-[33px] flex items-center gap-1 whitespace-nowrap ${disabled ? 'text-[#b3b4b8]' : ''}`} disabled={disabled}>
    <span className={`w-6 flex justify-center text-[14px] text-[#358ccf] ${disabled ? 'opacity-40' : ''}`}>{icon}</span>
    {text}
    {caret && <Caret className="w-2 ml-1 text-black" />}
  </button>
)

const Group = ({ label, className, children }: { label: string; className: string; children: React.ReactNode }) => (
  <div className={`shrink-0 relative flex flex-col ${className}`}>
    <div className="flex flex-1">{children}</div>
    <div className="text-center text-[#6a6b6f] leading-5">{label}</div>
    <div className="absolute right-0 top-1.5 bottom-1 w-0.5 bg-[#d9dadd]" />
  </div>
)

const Ribbon = () => (
  <div className="ml-[14px] shrink-0">
    <nav className="flex items-stretch h-9 bg-[#ebecee] text-[18px] border-t-2 border-[#ebecee]">
      <button className="w-[82px] ml-px h-8 bg-[#358ccf] text-white">文件</button>
      <button className="ml-1 px-3.5 bg-[#fafbff] text-[#2f7fc4]">主屏幕</button>
      {MENUS.map((m) => <button key={m} className="px-[15px]">{m}</button>)}
    </nav>
    <div className="flex h-[136px] pt-2 pb-[3px] border-l border-b-2 border-[#d5d6da] text-[18px] bg-[#fafbff]">
      <Group label="工作区" className="w-[86px]">
        <BigButton icon="app" line1="App" line2="开发器" className="w-full" />
      </Group>
      <Group label="模型" className="w-[170px]">
        <BigButton icon="component" line1="组" line2="件 1" caret className="w-[70px] ml-2.5" />
        <BigButton icon="addComponent" line1="添加组件" caret className="w-[78px]" />
      </Group>
      <Group label="定义" className="w-[200px]">
        <BigButton icon="params" line1="参数" caret className="w-[70px] ml-3" />
        <div className="flex flex-col ml-1">
          <SmallButton icon="a=" text="变量" caret />
          <SmallButton icon="f(x)" text="函数" caret />
          <SmallButton icon="Pi" text="参数实例" disabled />
        </div>
      </Group>
      <Group label="几何" className="w-[221px]">
        <BigButton icon="buildAll" line1="全部构建" className="w-[84px] ml-3" />
        <div className="flex flex-col ml-0.5">
          <SmallButton icon={<Icon name="importIcon" />} text="导入" />
          <SmallButton icon={<Icon name="livelink" />} text="LiveLink" caret />
        </div>
      </Group>
      <Group label="材料" className="w-[103px]">
        <BigButton icon="addMaterial" line1="添加材料" active className="w-[82px] ml-3" />
      </Group>
      <Group label="物理场" className="w-[185px]">
        <BigButton icon="electro" line1="静电" caret className="w-[60px] ml-4" />
        <BigButton icon="addPhysics" line1="添加物理场" active className="w-[100px]" />
      </Group>
      <Group label="网格" className="w-[171px]">
        <BigButton icon="buildMesh" line1="构建网格" className="w-[84px] ml-3.5" />
        <BigButton icon="mesh" line1="网" line2="格 1" caret className="w-[60px]" />
      </Group>
      <Group label="研究" className="w-[234px]">
        <BigButton icon="compute" line1="计算" className="w-[60px] ml-4" />
        <BigButton icon="study" line1="研" line2="究 1" caret className="w-[60px] ml-1" />
        <BigButton icon="addStudy" line1="添加研究" active className="w-[82px] ml-1" />
      </Group>
      <Group label="结果" className="w-[215px]">
        <BigButton icon="plotGroup" line1="位移" line2="(solid) 2" caret className="w-[96px] ml-3" />
        <BigButton icon="addPlot" line1="添加绘图组" caret className="w-[98px]" />
      </Group>
      <Group label="布局" className="w-[169px]">
        <BigButton icon="windows" line1="窗口" caret className="w-[60px] ml-4" />
        <BigButton icon="reset" line1="重置桌面" caret className="w-[84px] ml-0.5" />
      </Group>
    </div>
  </div>
)

/* ---------- trees ---------- */

interface Row {
  level: number
  icon: string
  text: string
  tag?: string
  open?: boolean
  selected?: boolean
}

const MODEL_ROWS: Row[] = [
  { level: 4, icon: 'diagCubes', text: '下电极' },
  { level: 4, icon: 'union', text: '上电极和SiO2' },
  { level: 4, icon: 'diagCubes', text: '锚点' },
  { level: 4, icon: 'union', text: 'Au' },
  { level: 4, icon: 'union', text: '固体' },
  { level: 4, icon: 'difference', text: '空气' },
  { level: 3, icon: 'integral', text: '积分 1', tag: '(intop1)' },
  { level: 3, icon: 'boundarySystem', text: '边界坐标系 1', tag: '(sys1)' },
  { level: 3, icon: 'view', text: '视图 1', open: false },
  { level: 2, icon: 'geometry', text: '几何 1', open: true },
  { level: 3, icon: 'importIcon', text: '导入 1', tag: '(imp1)' },
  { level: 3, icon: 'formUnion', text: '形成联合体', tag: '(fin)' },
  { level: 2, icon: 'material', text: '材料', open: true },
  { level: 3, icon: 'material', text: 'Au - Gold', tag: '(mat1)', open: false },
  { level: 3, icon: 'material', text: 'SiO2 - Silicon oxide', tag: '(mat2)', open: false },
  { level: 3, icon: 'material', text: 'Air', tag: '(mat3)', open: false },
  { level: 2, icon: 'deformed', text: '变形几何', open: true },
  { level: 3, icon: 'deformDomain', text: '变形域 1' },
  { level: 2, icon: 'solidPart', text: '固体力学', tag: '(solid)', open: true },
  { level: 3, icon: 'cylinderD', text: '线弹性材料 1' },
  { level: 3, icon: 'halfCylinderD', text: '自由 1' },
  { level: 3, icon: 'cylinderD', text: '初始值 1' },
  { level: 3, icon: 'halfCylinder', text: '固定约束 1' },
  { level: 2, icon: 'bolt', text: '静电', tag: '(es)', open: true },
  { level: 3, icon: 'cylinderDRed', text: '电荷守恒 1' },
  { level: 3, icon: 'halfCylinderD', text: '零电荷 1' },
  { level: 3, icon: 'cylinderDOrange', text: '初始值 1' },
  { level: 3, icon: 'cylinder', text: '电荷守恒 空气' },
  { level: 3, icon: 'cylinder', text: '终端 1', selected: true },
  { level: 3, icon: 'globalEq', text: '全局方程 1' },
  { level: 3, icon: 'cylinderRed', text: '终端 2' },
  { level: 2, icon: 'multiphysics', text: '多物理场', open: false },
  { level: 2, icon: 'meshTri', text: '网格 1', open: false },
  { level: 1, icon: 'glasses', text: '研究 1', open: true },
  { level: 2, icon: 'stationary', text: '步骤 1: 稳态' },
  { level: 2, icon: 'solverConfig', text: '求解器配置', open: true },
  { level: 3, icon: 'solution', text: '解 1', tag: '(sol1)', open: true },
  { level: 4, icon: 'compile', text: '编译方程: 稳态' },
  { level: 4, icon: 'dependent', text: '因变量 1', open: false },
  { level: 4, icon: 'stationarySolver', text: '稳态求解器 1', open: true },
  { level: 5, icon: 'direct', text: '直接' },
  { level: 5, icon: 'wrench', text: '高级' },
]

const STUDY_ROWS: Row[] = [
  { level: 0, icon: 'glasses', text: '一般研究', open: true },
  { level: 1, icon: 'frequency', text: '频域' },
  { level: 1, icon: 'stationary', text: '稳态' },
  { level: 1, icon: 'transient', text: '瞬态', selected: true },
  { level: 0, icon: 'glasses', text: '所选物理场接口的预设研究', open: true },
  { level: 1, icon: 'glasses', text: '固体力学', open: false },
  { level: 1, icon: 'glasses', text: '优化', open: false },
  { level: 1, icon: 'glasses', text: '静电', open: false },
  { level: 0, icon: 'glasses', text: '所选多物理场的预设研究', open: true },
  { level: 1, icon: 'eigen', text: '特征频率' },
  { level: 1, icon: 'buckling', text: '线性屈曲' },
  { level: 0, icon: 'glasses', text: '更多研究', open: false },
  { level: 0, icon: 'glasses', text: '一些物理场接口的预设研究', open: false },
  { level: 0, icon: 'glasses', text: '空研究' },
]

const INDENT = ['pl-[5px]', 'pl-[35px]', 'pl-[65px]', 'pl-[95px]', 'pl-[125px]', 'pl-[155px]']

const Tree = ({ rows, selectedClass }: { rows: Row[]; selectedClass: string }) => (
  <ul className="text-[18px]">
    {rows.map((row, i) => (
      <li key={i} className={`h-[27px] flex items-center gap-2.5 whitespace-nowrap ${INDENT[row.level]} ${row.selected ? selectedClass : ''}`}>
        <svg viewBox="0 0 16 16" className="w-4 h-4 shrink-0" aria-hidden="true">
          {row.open === true && <path d="M13 2v11H3z" fill="#3f3f3f" />}
          {row.open === false && <path d="M5 1l6 7-6 7z" fill="#fff" stroke="#8f8f8f" strokeWidth="1.300" />}
        </svg>
        <Icon name={row.icon} />
        <span>{row.text}</span>
        {row.tag && <em className="text-[19px]">{row.tag}</em>}
      </li>
    ))}
  </ul>
)

const Chevron = ({ d }: { d: string }) => (
  <svg viewBox="0 0 26 26" className="w-[26px] h-[26px] bg-[#f5f5f6] shrink-0" aria-hidden="true">
    <path d={d} fill="none" stroke="#c6c6c8" strokeWidth="2" />
  </svg>
)

const ModelBuilder = () => (
  <section className="w-[427px] shrink-0 border-2 border-[#99cffa] flex flex-col px-1.5 pb-2.5">
    <div className="flex items-center justify-between pl-1 h-[53px]">
      <h2 className="text-[32px] font-light text-[#2390ee] font-['Open_Sans','Noto_Sans_CJK_SC_Light','Noto_Sans_CJK_SC',sans-serif]">模型开发器</h2>
      <div className="flex items-center gap-2.5 text-[#358ccf]">
        <Caret className="w-3" />
        <Pin />
      </div>
    </div>
    <div className="flex items-center h-[22px] mb-[7px] pl-1 gap-2.5">
      <IconButton name="back" label="后退" />
      <IconButton name="forward" label="前进" />
      <IconButton name="up" label="上移" />
      <IconButton name="down" label="下移" />
      <IconButton name="showEye" label="显示" />
      <IconButton name="collapse" label="折叠" />
      <Caret className="w-3 mr-1.5 text-black" />
      <IconButton name="expand" label="展开" />
      <Caret className="w-3 mr-1.5 text-black" />
      <IconButton name="columns" label="列" />
      <Caret className="w-3 text-black" />
    </div>
    <div className="flex-1 min-h-0 border-2 border-[#d7d8dc] bg-white flex flex-col">
      <div className="flex flex-1 min-h-0">
        <div className="flex-1 min-w-0 overflow-hidden">
          <Tree rows={MODEL_ROWS} selectedClass="bg-[#bfe1fd]" />
        </div>
        <div className="w-[26px] flex flex-col shrink-0">
          <Chevron d="M8 16l5-5 5 5" />
          <div className="h-[156px] shrink-0" />
          <div className="h-[534px] bg-[#e7e7e7] shrink-0" />
          <div className="flex-1" />
          <Chevron d="M8 11l5 5 5-5" />
        </div>
      </div>
      <div className="flex h-[26px] shrink-0">
        <Chevron d="M15 8l-5 5 5 5" />
        <div className="w-[208px] bg-[#e7e7e7]" />
        <div className="flex-1" />
        <Chevron d="M11 8l5 5-5 5" />
        <div className="w-[26px] bg-[#efeff0]" />
      </div>
    </div>
  </section>
)

/* ---------- tab strips ---------- */

const Tab = ({ text, active, closable }: { text: string; active?: boolean; closable?: boolean }) => (
  <button
    className={`shrink-0 flex items-center text-[20px] whitespace-nowrap ${closable ? 'gap-3' : ''} ${
      active
        ? 'h-[38px] -mb-0.5 pt-1 border-2 border-b-0 border-[#d7d8dc] bg-[#fafbff] text-[#2b579a] px-[5px]'
        : 'h-9 bg-[#ebebec] px-[7px]'
    }`}
  >
    {text}
    {closable && (
      <svg viewBox="0 0 14 14" className="w-3.5 h-3.5 mr-1" aria-hidden="true"><path d="M1 1l12 12M13 1L1 13" stroke="#cdd3de" strokeWidth="2.400" /></svg>
    )}
  </button>
)

const TabStrip = ({ children, controls }: { children: React.ReactNode; controls?: boolean }) => (
  <div className="h-[45px] shrink-0 flex items-end gap-[11px] pl-1.5 border-b-2 border-[#d7d8dc]">
    {children}
    {controls && (
      <div className="ml-auto flex gap-2.5 items-center pr-1 pb-1.5 text-[#4a4a4a]">
        <Caret className="w-3" />
        <Pin />
      </div>
    )}
  </div>
)

/* ---------- settings ---------- */

const Section = ({ title, open }: { title: string; open?: boolean }) => (
  <button className="w-full h-[39px] bg-[#dfe8f5] flex items-center gap-4 pl-1.5 pb-0.5 text-[20px] shrink-0">
    <svg viewBox="0 0 16 16" className="w-4 h-4 mt-1" aria-hidden="true">
      {open ? <path d="M1 4h13l-6.500 8z" fill="#3f3f3f" /> : <path d="M4 1l6 7-6 7z" fill="#fff" stroke="#a5a6a8" strokeWidth="1.200" />}
    </svg>
    {title}
  </button>
)

const Select = ({ id, value, className = '' }: { id: string; value: string; className?: string }) => (
  <div className={`relative ${className}`}>
    <select id={id} className="w-full h-8 appearance-none rounded-[3px] border-2 border-[#d5d6da] bg-gradient-to-b from-[#eff0f1] to-[#e7e7e8] pl-[18px] text-[18px]">
      <option>{value}</option>
    </select>
    <Caret className="w-3 absolute right-2.5 top-3 text-black pointer-events-none" />
  </div>
)

const inputClass = 'h-[30px] min-w-0 border-2 border-[#d5d6da] bg-white px-0.5 text-[18px]'

const Settings = () => (
  <section className="w-[604px] shrink-0 border-2 border-[#d7d8dc] flex flex-col text-[18px]">
    <TabStrip controls>
      <Tab text="设置" active />
      <Tab text="属性" closable />
    </TabStrip>
    <h2 className="pl-2 pt-3 text-[22px] leading-[32px] font-light text-[#2b579a] font-['Open_Sans','Noto_Sans_CJK_SC_Light','Noto_Sans_CJK_SC',sans-serif]">终端</h2>
    <div className="flex items-center pl-[7px] pr-1.5 mt-4 h-[34px]">
      <label htmlFor="label" className="w-[54px]">标签:</label>
      <input id="label" className={`${inputClass} flex-1`} defaultValue="终端 1" />
      <button aria-label="转到源" className="ml-3 w-8 h-[34px] rounded border-2 border-[#d5d6da] bg-[#f0f0f1] flex items-center justify-center">
        <Icon name="goTo" className="w-6 h-6" />
      </button>
    </div>
    <div className="h-3.5 shrink-0" />
    <Section title="域选择" open />
    <div className="flex items-center pl-[7px] pr-1.5 mt-[13px]">
      <label htmlFor="selection" className="w-[54px]">选择:</label>
      <Select id="selection" value="上电极" className="flex-1" />
    </div>
    <div className="relative flex items-start pl-1.5 mt-2 mb-[15px]">
      <button aria-label="激活选择" className="w-[58px] h-[60px] rounded-md border-2 border-[#118df0] bg-[#9dcff8] flex items-center justify-center">
        <svg viewBox="0 0 46 24" className="w-[46px] h-6" aria-hidden="true">
          <rect x="1" y="1" width="44" height="22" rx="2" fill="#dfe0e2" stroke="#51677e" strokeWidth="2" />
          <rect x="5" y="7" width="24" height="10" rx="5" fill="#52a843" />
          <rect x="28" y="4" width="14" height="16" rx="1" fill="#b0b1b3" stroke="#51677e" strokeWidth="2" />
        </svg>
      </button>
      <ul className="ml-[11px] w-[420px] h-[180px] border-2 border-b-4 border-[#d5d6da] pl-[9px] leading-[30px]">
        <li>4</li>
        <li>5 (已替代)</li>
        <li>6 (已替代)</li>
      </ul>
      <div className="ml-6 grid grid-cols-2 gap-x-6 gap-y-1.5 mt-1">
        <IconButton name="diagCubes" label="创建选择" />
        <IconButton name="plusOff" label="添加" />
        <IconButton name="copy" label="复制选择" />
        <IconButton name="minus" label="移除" />
        <IconButton name="paste" label="粘贴选择" />
        <IconButton name="clearSelect" label="清除选择" />
        <IconButton name="extents" label="缩放到选择" />
      </div>
      {/* hand-drawn red mark round the overridden entries */}
      <svg viewBox="495 485 190 100" className="absolute left-[42px] top-4 w-[190px] h-[100px] pointer-events-none" aria-hidden="true">
        <path d="M646 498c-40-1-72-3-100 7-26 9-44 22-44 40 0 16 14 23 30 27 30 5 68 4 110 4 22-1 28-16 30-29 1-26-5-40-24-47l-14-5" fill="none" stroke="#e81c1c" strokeWidth="5.500" strokeLinecap="round" />
      </svg>
    </div>
    <div className="flex flex-col gap-[3px]">
      <Section title="替代与共存" />
      <Section title="方程" />
      <Section title="终端" open />
    </div>
    <div className="pl-[7px] pr-1.5 pt-3 flex flex-col">
      <label htmlFor="name" className="h-[30px] leading-[30px]">终端名称:</label>
      <input id="name" className={`${inputClass} mr-[27px] mt-1.5`} defaultValue="1" />
      <label htmlFor="type" className="h-[30px] leading-[30px] mt-1.5">终端类型:</label>
      <Select id="type" value="电压" className="mt-1.5" />
      <label htmlFor="voltage" className="h-[30px] leading-[30px] mt-1">电压:</label>
      <div className="flex items-center mt-1.5">
        <span className="w-[41px] pl-0.5"><i>V</i><sub className="ml-0.5 text-[16px]">0</sub></span>
        <input id="voltage" className={`${inputClass} flex-1 text-[#c8960c]`} defaultValue="VdcSP" />
        <span className="w-[26px] text-right">V</span>
      </div>
    </div>
  </section>
)

/* ---------- graphics ---------- */

const Sep = () => <div className="w-0.5 h-6 bg-[#d7d8dc] shrink-0" />
const ToolCaret = () => <Caret className="w-3 mr-[5px] text-[#1e1e1e]" />

const ROW1 = ['zoomIn', 'zoomOut', 'zoomBox', '>', 'extents', 'fitWindow', '|', 'triad', '>', 'planeXY', 'planeYZ', 'planeXZ', 'camView', '|', 'rotate', '>', '|', 'cylinder', '>', '|', 'grayLens', '>', 'blueLens', '>', 'select', 'clearSelect', '|', 'eyeOff', 'resetHide', 'showWindow', '>', '|']
const ROW2A = ['clipBox', '>', 'clipPlane', '>', '|']
const ROW2B = ['transparent', '>', 'wireCube']
const ROW2C = ['|', 'hideBox', 'palette', '>', '|', 'aperture', '>', 'camera', 'printer']

const Tools = ({ items }: { items: string[] }) => (
  <>
    {items.map((name, i) => {
      if (name === '|') return <Sep key={i} />
      if (name === '>') return <ToolCaret key={i} />
      return <IconButton key={i} name={name} label={name} />
    })}
  </>
)

const toggled = 'border-2 border-[#118df0] bg-[#9dcff8] rounded h-7 flex items-center justify-center shrink-0'

const Canvas = () => (
  <svg viewBox="1065 340 951 719" preserveAspectRatio="xMinYMin meet" className="w-full h-full block" role="img" aria-label="几何图形">
    {/* the model is drawn in its own skewed grid */}
    <g transform="translate(1060 400) scale(.6122 .4273)" fill="none">
      <g stroke="#8f9092" strokeWidth="1.4">
        <path d="M321 136L428 834M516 141L613 849M717 147L721 180M923 153L1000 879M227 253L1141 289M440 498L1164 538M301 715L1186 777" />
        <path d="M170 155L283 856" strokeWidth="6" stroke="#858585" />
        <path d="M314 882L1193 954M314 889L1193 961M314 885.500L1193 957.500" strokeWidth="2.200" />
        <path d="M422 888v12M610 904v12M800 918v12M996 934v12" />
      </g>
      <path
        d="M232 374L355 380C395 380 410 355 440 332C475 305 515 295 550 297C580 298 605 303 640 312L820 318C870 305 930 308 975 322C1030 342 1060 375 1080 390C1105 408 1125 415 1145 416L1172 712C1120 712 1110 735 1075 757C1040 780 1000 789 960 788C920 786 900 780 878 774L682 762C630 770 580 765 530 738C480 710 450 665 400 662L276 654Z
           M434 460C434 390 480 350 535 350C590 350 630 395 640 440L665 615C668 680 625 712 595 712C540 700 455 670 446 545L438 513Z
           M845 460C848 395 885 366 930 367C1000 370 1045 430 1050 485L1066 640C1066 710 1020 740 975 740C915 735 865 680 862 625Z"
        fill="#dcdcdc" fillRule="evenodd" stroke="#141414" strokeWidth="2"
      />
      <path d="M232 375L355 381C395 381 410 356 440 333C475 306 515 296 550 298C580 299 605 304 622 308M826 318C870 306 930 309 975 323C1030 343 1060 376 1080 391C1105 409 1125 416 1145 417M446 545C455 670 540 705 595 713M862 625C865 680 915 736 975 741M1145 416L1172 712M845 470L864 640M434 460L439 513" stroke="#222" strokeWidth="3.500" />
      <path d="M666 475L826 483L843 627L684 614Z" fill="#c4c4fd" />
      <path d="M666 475L684 614M826 483L843 627" stroke="#1414e8" strokeWidth="2" />
      <path d="M421 513h24M427 541h20M652 525h22M656 554h22" stroke="#111" strokeWidth="3" />
      <path d="M421 515L460 517L452 468L511 471L524 567L543 567L529 472L589 475L602 571L619 571L613 523L672 526L677 552L637 550L643 597L585 593L571 498L552 498L566 592L508 588L494 494L475 494L482 541L425 540" fill="#c4c4fd" stroke="#1414f0" strokeWidth="2.400" />
      <path d="M704 617c1-10 16-10 17 1zM804 624c1-12 17-12 18 1z" fill="#fff" stroke="#1414e8" strokeWidth="1.5" />
      <g fill="#55006e" stroke="#120018" strokeWidth="2.500">
        <path d="M606 178L810 184L844 483L644 474Z" />
        <path d="M663 615L861 627L892 907L698 891Z" />
        <path d="M282 407L370 411C395 413 405 430 410 450L434 605C437 635 425 646 410 646L318 640C295 637 287 615 284 595L257 440C256 420 265 408 282 407Z" />
        <path d="M1100 447L1126 447L1148 693L1120 691C1095 687 1088 670 1085 645L1069 485C1069 460 1080 447 1100 447Z" />
      </g>
      <path d="M257 430C260 410 270 402 285 402L372 406C400 408 410 430 413 450L435 610M1074 458C1080 445 1090 441 1100 441L1126 443" stroke="#2020f0" strokeWidth="2" />
      <path d="M606 178L810 184L844 483M663 615L861 627L892 907M1126 447L1148 693" stroke="#000" strokeWidth="3.500" />
    </g>
    <g strokeWidth="2.500">
      <path d="M1130 997l8-18" stroke="#4a82bb" />
      <path d="M1135 982l8-8-1 12-4 3z" fill="#4a82bb" />
      <path d="M1130 997h30" stroke={PINK} />
      <path d="M1158 992l13 5-13 5z" fill={PINK} />
      <path d="M1130 998l5 26" stroke="#52a843" />
      <path d="M1131 1023l8-1-2 13z" fill="#52a843" />
    </g>
    <g fontSize="17" fontFamily="DejaVu Sans, sans-serif" textAnchor="middle" fill="#000">
      <text x="1146" y="459">0</text>
      <text x="1146" y="538">-50</text>
      <text x="1178" y="638">0</text>
      <text x="1195" y="737">50</text>
      <text x="1315" y="815">-100</text>
      <text x="1429" y="822">-50</text>
      <text x="1547" y="829">0</text>
      <text x="1667" y="836">50</text>
      <text x="1148" y="972">z</text>
      <text x="1183" y="1003">x</text>
      <text x="1140" y="1048">y</text>
      <text x="1110" y="434"><tspan fontStyle="italic" fontSize="20">μ</tspan>m</text>
      <text x="1126" y="656"><tspan fontStyle="italic" fontSize="20">μ</tspan>m</text>
      <text x="1507" y="885"><tspan fontStyle="italic" fontSize="20">μ</tspan>m</text>
    </g>
  </svg>
)

const Graphics = () => (
  <section className="flex-1 min-w-0 border-2 border-[#d7d8dc] flex flex-col overflow-hidden">
    <TabStrip controls>
      <Tab text="图形" active />
      <Tab text="收敛图 1" closable />
    </TabStrip>
    <div className="flex-1 min-h-0 flex flex-col bg-gradient-to-b from-[#fafbff] from-10% to-[#e4f1ff]">
      <div className="flex items-center gap-2.5 h-[29px] pl-3 mt-2.5"><Tools items={ROW1} /></div>
      <div className="flex items-center gap-2.5 h-[29px] pl-2.5">
        <Tools items={ROW2A} />
        <button aria-label="场景光" className={`${toggled} w-[54px] gap-1`}><Icon name="light" /><Caret className="w-3 text-black" /></button>
        <Tools items={ROW2B} />
        <div className="flex gap-1.5 -mx-0.5">
          <button aria-label="显示坐标轴" className={`${toggled} w-7`}><Icon name="axesBox" className="w-5 h-5" /></button>
          <button aria-label="显示网格" className={`${toggled} w-7`}><Icon name="grid" className="w-5 h-5" /></button>
        </div>
        <Tools items={ROW2C} />
      </div>
      <div className="flex-1 min-h-0 mt-[3px]"><Canvas /></div>
    </div>
  </section>
)

/* ---------- add study ---------- */

const Legend = ({ text }: { text: string }) => (
  <div className="flex items-center gap-[5px] pl-2 h-6 shrink-0">
    <div className="w-[15px] h-0.5 bg-[#d7d8dc]" />
    <h3 className="whitespace-nowrap">{text}</h3>
    <div className="flex-1 h-0.5 bg-[#d7d8dc]" />
  </div>
)

const PhysicsTable = ({ head, rows }: { head: string; rows: { icon: string; text: string }[] }) => (
  <table className="ml-1.5 w-full border-2 border-r-0 border-[#d5d6da] border-collapse text-left">
    <thead>
      <tr className="h-[42px] bg-[#efeff0]">
        <th className="w-[30px] border-r-2 border-[#aeafb1]" />
        <th className="font-normal pl-2 pt-2">{head}</th>
      </tr>
    </thead>
    <tbody>
      {rows.map((r) => (
        <tr key={r.text} className="h-7 bg-[#f5f5f6] border-b-2 border-[#aeafb1]">
          <td className="border-r-2 border-[#aeafb1] py-0"><Icon name={r.icon} className="w-[22px] h-[22px] mx-auto" /></td>
          <td className="pl-1.5 leading-6 py-0">{r.text}</td>
        </tr>
      ))}
    </tbody>
  </table>
)

const AddStudy = () => (
  <section className="w-[317px] shrink-0 border-2 border-r-0 border-[#d7d8dc] flex flex-col overflow-hidden text-[18px] pb-1">
    <TabStrip>
      <Tab text="添加物理场" closable />
      <Tab text="添加研究" active closable />
      <Tab text="添加材料" />
    </TabStrip>
    <button className="flex items-center gap-1.5 pl-[11px] h-6 mt-3.5 shrink-0 text-left">
      <Icon name="plus" className="w-6 h-6" />
      添加研究
    </button>
    <div className="h-[19px] shrink-0" />
    <Legend text="研究" />
    <div className="ml-1.5 mt-3 h-[460px] shrink-0 border-2 border-r-0 border-[#d7d8dc] bg-white">
      <Tree rows={STUDY_ROWS} selectedClass="bg-[#dadadd]" />
    </div>
    <div className="h-2 shrink-0" />
    <Legend text="研究中的物理场接口" />
    <div className="h-2.5 shrink-0" />
    <PhysicsTable head="物理场" rows={[{ icon: 'solidPart', text: '固体力学 (solid)' }, { icon: 'bolt', text: '静电 (es)' }]} />
    <div className="h-2 shrink-0" />
    <Legend text="研究中的多物理场耦合" />
    <div className="h-2 shrink-0" />
    <div className="flex-1 min-h-0 overflow-hidden">
      <PhysicsTable head="多物理场耦合" rows={[{ icon: 'bolt', text: '机电力 1 (eme1)' }]} />
    </div>
  </section>
)

/* ---------- messages ---------- */

const FILE = '保存的文件：C:\\Users\\28054\\Desktop\\COMSOL仿真文件\\超表面\\超表面3\\超表面3_v2\\超表面3（吸合电压）V2.mph'
const LOG = [
  ['12:05', '求解的自由度数：176395。'],
  ['1:07', '求解的自由度数：176395。'],
  ['1:08', '求解的自由度数：176395。'],
  ['1:08', '求解的自由度数：176395。'],
  ['1:15', '求解的自由度数：167047。'],
  ['1:17', FILE],
  ['1:29', FILE],
  ['1:36', '求解的自由度数：167047。'],
  ['1:51', '求解的自由度数：93054。'],
  ['1:59', '求解的自由度数：93054。'],
  ['2:04', '求解的自由度数：98709。'],
  ['5:39', '求解的自由度数：98709。'],
]

const Messages = () => (
  <section className="h-[397px] shrink-0 border-2 border-r-0 border-[#d7d8dc] flex flex-col">
    <TabStrip>
      <Tab text="消息" active closable />
      <Tab text="进度" />
      <Tab text="日志" />
      <Tab text="Evaluation 3D" closable />
    </TabStrip>
    <div className="h-[43px] shrink-0 flex items-center gap-2 pl-2.5 pt-1.5">
      <IconButton name="broom" label="清除" />
      <button aria-label="弹出消息" className="w-7 h-7 rounded border-2 border-[#118df0] bg-[#9dcff8] flex items-center justify-center"><Icon name="mail" /></button>
    </div>
    <div className="ml-1.5 mb-1.5 flex-1 min-h-0 border-2 border-r-0 border-[#d7d8dc] overflow-hidden">
      <div className="-mt-3.5 pl-1 text-[18px] leading-6 whitespace-nowrap">
        {LOG.map(([time, text], i) => (
          <p key={i}>[2024年11月25日 下午{time}] {text}</p>
        ))}
      </div>
    </div>
  </section>
)

export default function App() {
  return (
    <div className="relative h-screen overflow-hidden bg-[#e6e7e7] pt-[3px] text-black font-['Noto_Sans','Noto_Sans_CJK_SC',sans-serif]">
      <div className="h-full flex flex-col bg-[#fafbff] border-l-2 border-t border-[#a9aaac] rounded-tl-xl">
        <TitleBar />
        <Ribbon />
        <main className="flex-1 min-h-0 flex pl-[13px] pt-1.5 pb-4">
          <ModelBuilder />
          <div className="w-[9px] shrink-0" />
          <Settings />
          <div className="w-2 shrink-0" />
          <div className="flex-1 min-w-0 flex flex-col gap-[7px]">
            <div className="flex-1 min-h-0 flex gap-2">
              <Graphics />
              <AddStudy />
            </div>
            <Messages />
          </div>
        </main>
      </div>
      <div className="absolute right-1 bottom-[18px] text-[44px] leading-none text-[#e2e3e6] [text-shadow:1px_1px_1px_#8d8f93]">CSDN @嘣.</div>
    </div>
  )
}
